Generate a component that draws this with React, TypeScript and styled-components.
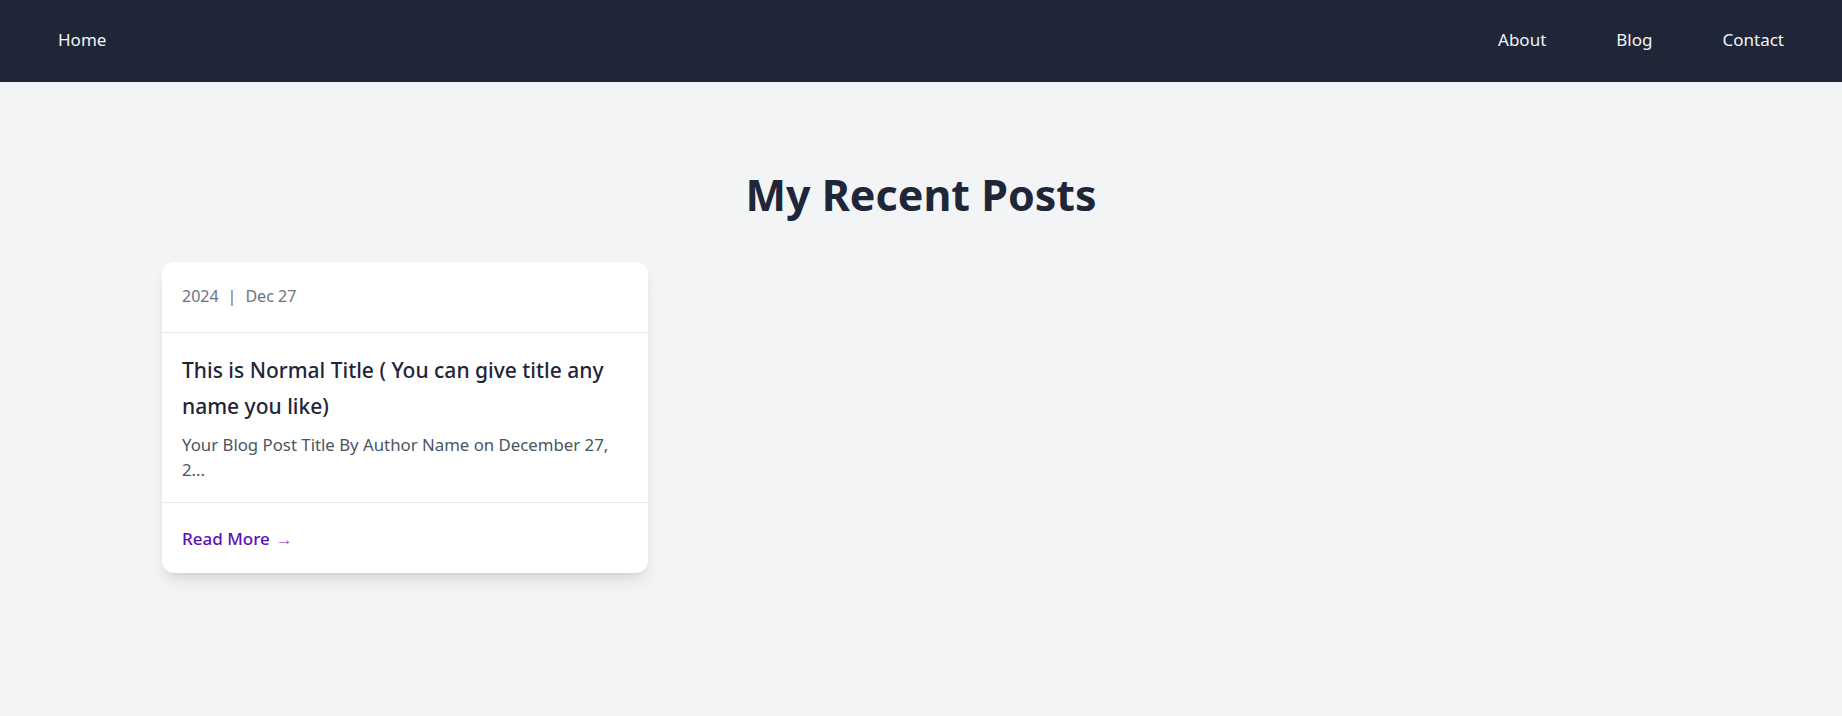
import React from "react";
import styled, { createGlobalStyle } from "styled-components";

const GlobalStyle = createGlobalStyle`
  html, body { margin: 0; padding: 0; }
  body {
    background: #f3f4f6;
    font-family: "Noto Sans", "Open Sans", sans-serif;
    -webkit-font-smoothing: antialiased;
  }
  * { box-sizing: border-box; }
`;

const Page = styled.div`
  min-height: 716px;
  background: #f3f4f6;
`;

const NavBar = styled.nav`
  height: 82px;
  background: #1f2638;
  display: flex;
  align-items: center;
  justify-content: space-between;
  padding: 0 58px 2px;
`;

const NavLinks = styled.div`
  display: flex;
  align-items: center;
  gap: 70px;
`;

const NavLink = styled.a`
  color: #f3f4f6;
  font-size: 17px;
  text-decoration: none;
  line-height: 24px;
`;

const Main = styled.main`
  padding: 85px 162px 40px;
`;

const Heading = styled.h1`
  margin: 0 0 39px;
  text-align: center;
  font-size: 43px;
  line-height: 56px;
  font-weight: 700;
  color: #1f2638;
`;

const Grid = styled.div`
  display: grid;
  grid-template-columns: repeat(3, 1fr);
  gap: 30px;
`;

const Card = styled.article`
  background: #fff;
  border-radius: 12px;
  box-shadow: 0 10px 15px -3px rgba(0, 0, 0, 0.1), 0 4px 6px -4px rgba(0, 0, 0, 0.1);
  overflow: hidden;
`;

const CardHeader = styled.div`
  height: 71px;
  padding: 0 20px 2px;
  display: flex;
  align-items: center;
  border-bottom: 1px solid #e5e7eb;
  color: #6b7280;
  font-size: 16px;
`;

const Sep = styled.span`
  margin: 0 9px;
`;

const CardBody = styled.div`
  padding: 19px 20px 20px;
  border-bottom: 1px solid #e5e7eb;
`;

const CardTitle = styled.h2`
  margin: 0 0 8px;
  font-size: 21px;
  line-height: 36px;
  font-weight: 500;
  color: #1f2638;
`;

const CardText = styled.p`
  margin: 0;
  font-size: 16.8px;
  line-height: 25px;
  color: #4b5563;
`;

const CardFooter = styled.div`
  height: 70px;
  padding: 0 20px;
  display: flex;
  align-items: center;
`;

const ReadMore = styled.a`
  color: #5b0fb8;
  font-size: 17px;
  font-weight: 500;
  text-decoration: none;
`;

const Arrow = styled.span`
  margin-left: 6px;
  color: #9b5fd6;
  font-size: 17px;
`;

export default function App() {
  return (
    <Page>
      <GlobalStyle />
      <NavBar>
        <NavLink href="#">Home</NavLink>
        <NavLinks>
          <NavLink href="#">About</NavLink>
          <NavLink href="#">Blog</NavLink>
          <NavLink href="#">Contact</NavLink>
        </NavLinks>
      </NavBar>
      <Main>
        <Heading>My Recent Posts</Heading>
        <Grid>
          <Card>
            <CardHeader>
              2024<Sep>|</Sep>Dec 27
            </CardHeader>
            <CardBody>
              <CardTitle>This is Normal Title ( You can give title any name you like)</CardTitle>
              <CardText>Your Blog Post Title By Author Name on December 27, 2...</CardText>
            </CardBody>
            <CardFooter>
              <ReadMore href="#">
                Read More<Arrow>→</Arrow>
              </ReadMore>
            </CardFooter>
          </Card>
        </Grid>
      </Main>
    </Page>
  );
}
